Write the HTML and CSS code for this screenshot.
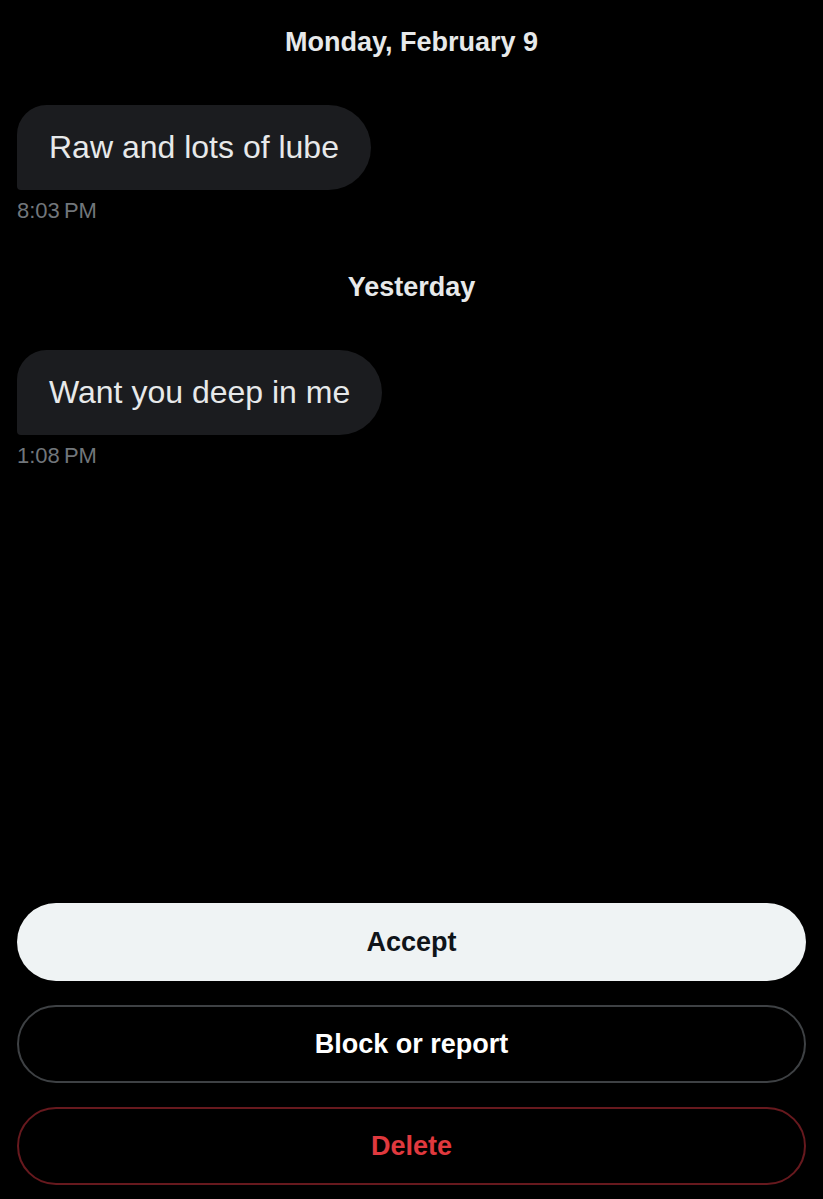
FILE: index.html
```html
<!DOCTYPE html>
<html lang="en">
<head>
    <meta charset="UTF-8">
    <meta name="viewport" content="width=device-width, initial-scale=1.0">
    <title>Message request</title>
    <link rel="stylesheet" href="styles.css">
</head>
<body>

<div class="screen">
    <!-- Conversation -->
    <div class="conversation">
        <div class="day-label">Monday, February 9</div>
        <div class="message">
            <div class="bubble">Raw and lots of lube</div>
            <div class="time">8:03 PM</div>
        </div>

        <div class="day-label">Yesterday</div>
        <div class="message">
            <div class="bubble">Want you deep in me</div>
            <div class="time">1:08 PM</div>
        </div>
    </div>

    <!-- Request actions -->
    <div class="actions">
        <button class="btn btn-accept">Accept</button>
        <button class="btn btn-block">Block or report</button>
        <button class="btn btn-delete">Delete</button>
    </div>
</div>

</body>
</html>
```

FILE: styles.css
```css
html, body {
    margin: 0;
    padding: 0;
    background-color: #000;
}
body {
    font-family: "Liberation Sans", Arial, sans-serif;
    color: #e7e9ea;
}
.screen {
    height: 1199px;
    display: flex;
    flex-direction: column;
    justify-content: space-between;
    padding: 0 17px;
    box-sizing: border-box;
}
.conversation {
    display: flex;
    flex-direction: column;
    padding-top: 27px;
}
.day-label {
    text-align: center;
    font-weight: bold;
    font-size: 27px;
    line-height: 30px;
    color: #e7e9ea;
    margin-bottom: 48px;
}
.message {
    display: flex;
    flex-direction: column;
    align-items: flex-start;
    margin-bottom: 49px;
}
.bubble {
    background-color: #1b1c1f;
    font-size: 32px;
    line-height: 36px;
    padding: 24px 32px 25px 32px;
    border-radius: 30px 43px 43px 4px;
}
.time {
    font-size: 22px;
    line-height: 24px;
    word-spacing: -2px;
    color: #71767b;
    margin-top: 9px;
}
.actions {
    display: flex;
    flex-direction: column;
    gap: 24px;
    padding-bottom: 14px;
}
.btn {
    height: 78px;
    border-radius: 39px;
    font-family: "Liberation Sans", Arial, sans-serif;
    font-size: 27px;
    font-weight: bold;
    background: transparent;
    box-sizing: border-box;
}
.btn-accept {
    background-color: #eff3f4;
    border: none;
    color: #0f1419;
}
.btn-block {
    border: 2px solid #3e4144;
    color: #fff;
}
.btn-delete {
    border: 2px solid #67191e;
    color: #e0393e;
}
```
